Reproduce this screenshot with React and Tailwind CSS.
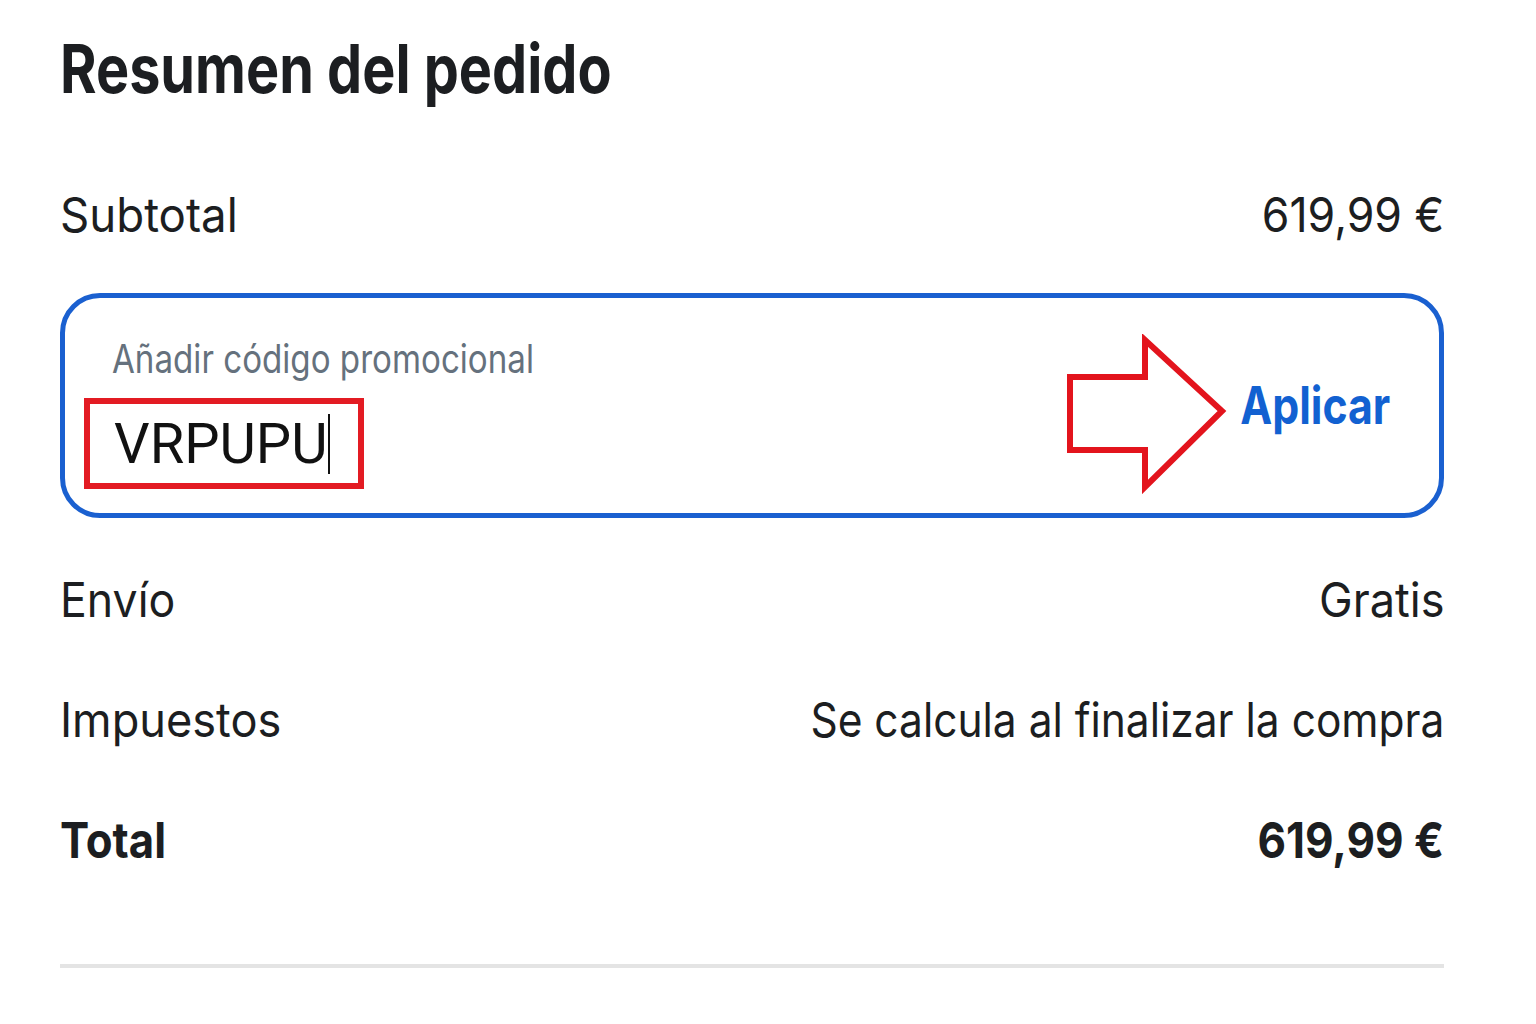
import React from "react";

const font = { fontFamily: "Inter, 'Noto Sans', sans-serif" };

function Row({ left, right, bold, ls, rs }) {
  const base = `inline-block whitespace-nowrap leading-none text-[#1c1e21] ${
    bold ? "font-bold text-[50px]" : "font-normal text-[48px]"
  }`;
  return (
    <div className="flex h-[80px] items-center justify-between">
      <span className={`${base} origin-left ${ls}`}>{left}</span>
      <span className={`${base} origin-right ${rs}`}>{right}</span>
    </div>
  );
}

export default function App() {
  return (
    <div className="min-h-[1024px] w-[1536px] bg-white" style={font}>
      <div className="ml-[60px] flex w-[1384px] flex-col pt-[28px]">
        <div className="flex h-[80px] items-center">
          <h1 className="inline-block origin-left scale-x-[0.832] whitespace-nowrap text-[67px] font-bold leading-none text-[#1c1e21]">
            Resumen del pedido
          </h1>
        </div>

        <div className="mt-[67px]">
          <Row left="Subtotal" right="619,99 €" ls="scale-x-[0.95]" rs="scale-x-[0.93]" />
        </div>

        <div className="relative mt-[38px] flex h-[225px] items-center justify-between rounded-[40px] border-[5px] border-[#1a60d0] pr-[49px]">
          <div className="flex h-full flex-col self-start pt-[40px]">
            <div className="ml-[47px] flex h-[40px] items-center">
              <span className="inline-block origin-left scale-x-[0.85] whitespace-nowrap text-[39px] leading-none text-[#65717d]">
                Añadir código promocional
              </span>
            </div>
            <div className="ml-[19px] mt-[20px] flex h-[91px] w-[280px] items-center border-[6px] border-[#e31b23] pl-[24px]">
              <span
                className="whitespace-nowrap text-[56px] leading-none text-[#111]"
                style={{ fontFamily: "Roboto, 'Noto Sans', sans-serif" }}
              >
                VRPUPU
              </span>
              <span className="ml-[1px] h-[60px] w-[2px] bg-[#111]" />
            </div>
          </div>

          <svg
            className="absolute left-[1001px] top-[36px]"
            width="166"
            height="160"
            viewBox="0 0 166 160"
            fill="none"
          >
            <polygon
              points="4,43 79,43 79,6 156,77 79,153 79,116 4,116"
              stroke="#e3141d"
              strokeWidth="6"
              strokeLinejoin="miter"
              fill="none"
            />
          </svg>

          <span className="inline-block origin-right scale-x-[0.823] whitespace-nowrap text-[52px] font-bold leading-none text-[#1261d1]">
            Aplicar
          </span>
        </div>

        <div className="mt-[42px] flex flex-col gap-[40px]">
          <Row left="Envío" right="Gratis" ls="scale-x-[0.93]" rs="scale-x-[0.94]" />
          <Row
            left="Impuestos"
            right="Se calcula al finalizar la compra"
            ls="scale-x-[0.94]"
            rs="scale-x-[0.885]"
          />
          <Row left="Total" right="619,99 €" bold ls="scale-x-[0.875]" rs="scale-x-[0.88]" />
        </div>

        <div className="mt-[84px] h-[4px] w-full bg-[#e4e4e4]" />
      </div>
    </div>
  );
}
